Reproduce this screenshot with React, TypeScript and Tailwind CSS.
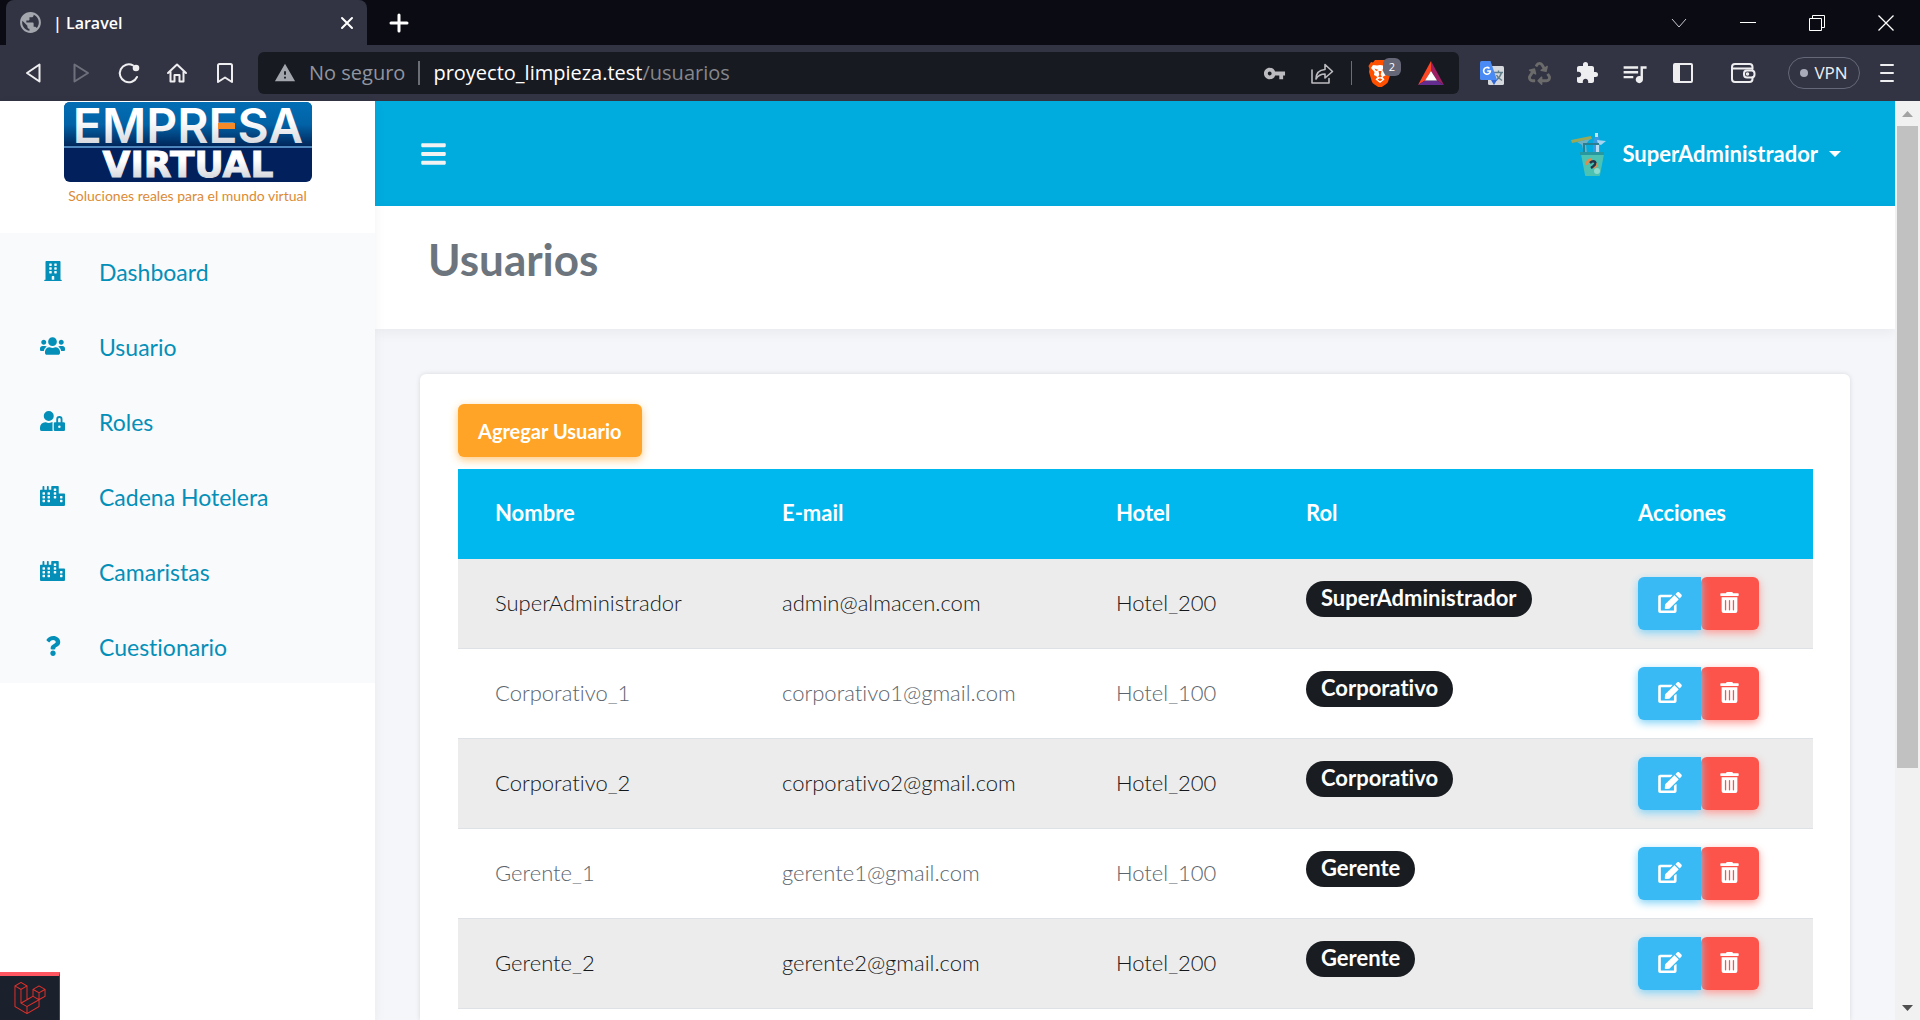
import React from "react";
import {
  FaBars,
  FaBuilding,
  FaCity,
  FaEdit,
  FaQuestion,
  FaRecycle,
  FaTrashAlt,
  FaUserLock,
  FaUsers,
} from "react-icons/fa";
import { MdExtension, MdPublic, MdQueueMusic, MdVpnKey, MdWarning } from "react-icons/md";
import { SiLaravel } from "react-icons/si";

const line = {
  fill: "none",
  stroke: "currentColor",
  strokeWidth: 2,
  strokeLinecap: "round" as const,
  strokeLinejoin: "round" as const,
};

function TabStrip() {
  return (
    <div className="flex h-[45px] shrink-0 items-stretch bg-[#0b0b14] pl-[6px] text-white">
      <div className="flex w-[361px] items-center rounded-t-lg bg-[#323443] pr-3 pl-3">
        <MdPublic className="size-[25px] text-[#a3a6ad]" />
        <span className="ml-[10px] flex-1 text-[16px] font-semibold">| Laravel</span>
        <button aria-label="Cerrar pestaña" className="flex size-4 items-center justify-center">
          <svg viewBox="0 0 14 14" className="size-[14px]" {...line}>
            <path d="M2 2l10 10M12 2L2 12" />
          </svg>
        </button>
      </div>
      <button aria-label="Nueva pestaña" className="ml-[22px] flex items-center">
        <svg viewBox="0 0 20 20" className="size-5" {...line} strokeWidth={3}>
          <path d="M10 2v16M2 10h16" />
        </svg>
      </button>
      <div className="ml-auto flex items-center gap-[53px] pr-[26px]">
        <button aria-label="Buscar pestañas">
          <svg viewBox="0 0 16 16" className="size-4" fill="none" stroke="#c9c9cf">
            <path d="M1 4l7 8 7-8" />
          </svg>
        </button>
        <button aria-label="Minimizar">
          <svg viewBox="0 0 16 16" className="size-4" fill="none" stroke="white">
            <path d="M0 7.500h16" />
          </svg>
        </button>
        <button aria-label="Restaurar">
          <svg viewBox="0 0 16 16" className="size-4" fill="none" stroke="white">
            <path d="M.5 3.500h12v12H.5zM3.500 3V.5h12v12H13" />
          </svg>
        </button>
        <button aria-label="Cerrar ventana">
          <svg viewBox="0 0 16 16" className="size-4" fill="none" stroke="white" strokeWidth={1.300}>
            <path d="M.5.5l15 15M15.500.5l-15 15" />
          </svg>
        </button>
      </div>
    </div>
  );
}

function Toolbar() {
  return (
    <div className="flex h-[56px] shrink-0 items-center bg-[#323443] pr-[25px] pl-[21px] text-[#eeeef0]">
      <div className="flex w-[237px] items-center gap-6">
        <button aria-label="Atrás">
          <svg viewBox="0 0 24 24" className="size-6" {...line}>
            <path d="M18.500 3.500v17L6 12z" />
          </svg>
        </button>
        <button aria-label="Adelante" className="text-[#6e707c]">
          <svg viewBox="0 0 24 24" className="size-6" {...line}>
            <path d="M5.500 3.500v17L19 12z" />
          </svg>
        </button>
        <button aria-label="Recargar">
          <svg viewBox="0 0 24 24" className="size-6" {...line}>
            <path d="M20 16A9 9 0 1 1 16 4.300" />
            <circle cx="19" cy="7" r="2.300" fill="currentColor" />
          </svg>
        </button>
        <button aria-label="Inicio">
          <svg viewBox="0 0 24 24" className="size-6" {...line}>
            <path d="M3 12l9-8.500 9 8.500M5.500 10.500v10h4v-6.500h5v6.500h4v-10" />
          </svg>
        </button>
        <button aria-label="Marcador">
          <svg viewBox="0 0 24 24" className="size-6" {...line}>
            <path d="M5 4.500q0-1.500 1.500-1.500h11q1.500 0 1.500 1.500v16.500l-7-4.500-7 4.500z" />
          </svg>
        </button>
      </div>

      <div className="flex h-[42px] flex-1 items-center rounded-md bg-[#181a21] pr-[14px] pl-[16px]">
        <MdWarning className="size-[22px] text-[#a3a6ad]" />
        <span className="ml-[13px] text-[20px] text-[#9095a0]">No seguro</span>
        <span className="mx-[13px] h-6 w-[2px] bg-[#6c6e75]" />
        <span className="text-[20px] text-white">
          proyecto_limpieza.test<span className="text-[#85878d]">/usuarios</span>
        </span>
        <div className="ml-auto flex items-center">
          <button aria-label="Contraseñas">
            <MdVpnKey className="size-[23px] text-[#bcbcc0]" />
          </button>
          <button aria-label="Compartir" className="ml-[24px] text-[#bcbcc0]">
            <svg viewBox="0 0 24 24" className="size-6" {...line} strokeWidth={1.600}>
              <path d="M2 9v13h17v-4.500" />
              <path d="M6 18c0-6 3-9 9-9.500V3.500l7.500 7-7.500 6.500v-4c-4 0-7 1.500-9 5z" />
            </svg>
          </button>
          <span className="ml-[17px] h-6 w-px bg-[#6c6e75]" />
          <button aria-label="Brave Shields" className="relative ml-[16px]">
            <svg viewBox="0 0 24 28" className="h-7 w-6">
              <path
                fill="#ff5000"
                d="M7 1h10l2 2.500 2-.5 2.500 4-1 3 .5 3-3 10c-1 2-6 5-8 6-2-1-7-4-8-6l-3-10 .5-3-1-3L3 3l2 .5z"
              />
              <path
                fill="white"
                d="M5 6l4 .5 3-.5 3 .5 4-.5 2 3-3.500 4 .5 3-3.500 2 2 2.500-4.500 3.500-4.500-3.500 2-2.500L6 16l.5-3L3 9z"
              />
              <path
                fill="#ff5000"
                d="M6.500 9.500l4 1.500-2.500 1zM17.500 9.500l-4 1.500 2.500 1zM10.500 12h3l-.8 4 1.300 1.500-2 1-2-1 1.300-1.500zM9.500 20.500l2.500-1.200 2.500 1.200-2.500 1.800z"
              />
            </svg>
            <span className="absolute -top-[1px] left-[15px] flex h-[18px] w-[18px] items-center justify-center rounded-md bg-[#656777] text-[11px] text-white">
              2
            </span>
          </button>
          <button aria-label="Brave Rewards" className="ml-[25px]">
            <svg viewBox="0 0 28 24" className="h-6 w-7">
              <path fill="#ff4724" d="M14 0v10L8 19.500 1 24z" />
              <path fill="#9e1f63" d="M14 0l13 24-7-4.500L14 10z" />
              <path fill="#662d91" d="M1 24l7-4.500h12l7 4.500z" />
              <path fill="white" d="M14 10l6 9.500H8z" />
            </svg>
          </button>
        </div>
      </div>

      <div className="ml-[20px] flex items-center">
        <button aria-label="Traductor">
          <svg viewBox="0 0 26 26" className="size-[26px]">
            <rect x="9" y="6" width="16" height="19" rx="1.500" fill="#d5d8dc" />
            <path d="M15 12.500h9M19.500 10.500v2M22.500 12.500c-1 4-3 6-5.500 8M17.500 15c1 2.500 3 4 5.500 5.500" fill="none" stroke="#607d8b" strokeWidth="1.400" />
            <path d="M12 20h6l-3 5z" fill="#3367d6" />
            <path d="M2.500 1h9L18 20H2.500Q1 20 1 18.500v-16Q1 1 2.500 1z" fill="#4a8af4" />
            <path d="M10.500 8.500A3.400 3.400 0 1 0 11.400 11H8.200" fill="none" stroke="white" strokeWidth="1.600" />
          </svg>
        </button>
        <button aria-label="Reciclar" className="ml-[23px]">
          <FaRecycle className="size-[23px] text-[#6b6b6b]" />
        </button>
        <button aria-label="Extensiones" className="ml-[24px]">
          <MdExtension className="size-6" />
        </button>
        <button aria-label="Lista de reproducción" className="ml-[21px]">
          <MdQueueMusic className="size-[29px]" />
        </button>
        <button aria-label="Panel lateral" className="ml-[23px]">
          <svg viewBox="0 0 22 20" className="h-5 w-[22px]">
            <path fill="currentColor" fillRule="evenodd" d="M3 0h16q2 0 2 2v16q0 2-2 2H3q-2 0-2-2V2q0-2 2-2zM8 2v16h11V2z" />
          </svg>
        </button>
        <button aria-label="Cartera" className="ml-[36px]">
          <svg viewBox="0 0 26 24" className="h-6 w-[26px]" {...line}>
            <path d="M22.500 8V6q0-3-3-3H5Q2 3 2 6v12q0 3 3 3h14.500q3 0 3-3v-1.500M2.500 7.500h20" />
            <rect x="14" y="9.500" width="10.500" height="7" rx="3" />
            <circle cx="17.500" cy="13" r=".8" fill="currentColor" />
          </svg>
        </button>
        <button className="ml-[32px] flex h-8 w-[72px] items-center justify-center gap-[6px] rounded-full border border-[#656879] text-[17px]">
          <span className="size-[8px] rounded-full bg-[#a9abbb]" />
          VPN
        </button>
        <button aria-label="Menú" className="ml-[19px]">
          <svg viewBox="0 0 16 20" className="h-5 w-4" {...line}>
            <path d="M2 2h12M2 10h12M2 18h12" />
          </svg>
        </button>
      </div>
    </div>
  );
}

function CompanyLogo() {
  return (
    <div className="flex h-[132px] flex-col items-center pt-px">
      <svg viewBox="0 0 248 80" className="h-20 w-[248px] overflow-visible" role="img" aria-label="Empresa Virtual">
        <defs>
          <linearGradient id="logoTop" x1="0" y1="0" x2="0" y2="1">
            <stop offset="0" stopColor="#026eb5" />
            <stop offset=".5" stopColor="#0262a6" />
            <stop offset="1" stopColor="#012458" />
          </linearGradient>
          <linearGradient id="logoText" x1="0" y1="0" x2="0" y2="1">
            <stop offset=".4" stopColor="#ffffff" />
            <stop offset="1" stopColor="#c4c8d0" />
          </linearGradient>
        </defs>
        <rect width="248" height="80" rx="6" fill="#01205c" />
        <path d="M0 45V6q0-6 6-6h236q6 0 6 6v39z" fill="url(#logoTop)" />
        <path d="M0 45h248" stroke="#4d86bd" strokeWidth="2" />
        <text x="124" y="41" textAnchor="middle" fontFamily="Inter, sans-serif" fontWeight="600" fontSize="48" fill="url(#logoText)">
          EMPRESA
        </text>
        <path d="M154 21h17v6h-17z" fill="#f58a26" />
        <text
          x="124"
          y="75"
          textAnchor="middle"
          fontFamily="DejaVu Sans, sans-serif"
          fontWeight="700"
          fontSize="36"
          fill="url(#logoText)"
          stroke="url(#logoText)"
          strokeWidth="1"
        >
          VIRTUAL
        </text>
      </svg>
      <span className="mt-[4px] text-[14px] leading-5 text-[#dc8a35]">
        Soluciones reales para el mundo virtual
      </span>
    </div>
  );
}

const menu = [
  { label: "Dashboard", icon: <FaBuilding className="h-5 w-[18px]" /> },
  { label: "Usuario", icon: <FaUsers className="h-5 w-[25px]" /> },
  { label: "Roles", icon: <FaUserLock className="h-5 w-[25px]" /> },
  { label: "Cadena Hotelera", icon: <FaCity className="h-5 w-[25px]" /> },
  { label: "Camaristas", icon: <FaCity className="h-5 w-[25px]" /> },
  { label: "Cuestionario", icon: <FaQuestion className="size-5" /> },
];

function Sidebar() {
  return (
    <aside className="relative flex w-[375px] shrink-0 flex-col bg-white shadow-[0_4px_12px_rgba(0,0,0,0.05)]">
      <CompanyLogo />
      <nav className="bg-[#f9fafc]">
        {menu.map((item) => (
          <a key={item.label} href="#" className="flex h-[75px] items-center pl-[40px] text-[#048fb8]">
            <span className="flex w-[25px] justify-center">{item.icon}</span>
            <span className="ml-[34px] pt-[2px] text-[23px] leading-8">{item.label}</span>
          </a>
        ))}
      </nav>
      <button
        aria-label="Barra de depuración de Laravel"
        className="mt-auto flex h-12 w-[60px] items-center justify-center border-t-4 border-r border-t-[#ff5661] border-r-[#3f4651] bg-[#1a202c]"
      >
        <SiLaravel className="size-8 text-[#e0302a]" />
      </button>
    </aside>
  );
}

function Avatar() {
  return (
    <svg viewBox="0 0 38 44" className="h-11 w-[38px]" aria-hidden="true">
      <path d="M1 8l20-4 1 3L2 11z" fill="#9aa957" />
      <path d="M7 10l13-3-4 5 1 10h-3L12 13z" fill="#6fb0c4" />
      <path d="M26 2l2 1 2 6v14h-7V10z" fill="#3c9be0" />
      <path d="M25 1h3v4h-3z" fill="#c5e3f2" />
      <path d="M27 8l9 1-5 4-3-1z" fill="#a5d5f1" />
      <path d="M14 21v-9h14v9" fill="none" stroke="#287f92" strokeWidth="2" />
      <path d="M26 13h3v11h-3z" fill="#bcdcf0" />
      <path d="M11 22h23l-4 21q0 1-1 1H16q-1 0-1-1z" fill="#4cc3b2" />
      <path d="M10 20h24v3H10z" fill="#2798a0" />
      <path d="M17 33q-1-4 5-6" fill="none" stroke="#e58a4d" strokeWidth="2.500" />
      <path d="M20 31q3-3 5-1t-4 6" fill="none" stroke="#26344a" strokeWidth="2.500" />
      <path d="M24 36q4-2 3-5" fill="none" stroke="#e58a4d" strokeWidth="1.500" />
      <circle cx="27" cy="39" r="3" fill="#8bdccf" />
    </svg>
  );
}

const users = [
  { name: "SuperAdministrador", email: "admin@almacen.com", hotel: "Hotel_200", role: "SuperAdministrador" },
  { name: "Corporativo_1", email: "corporativo1@gmail.com", hotel: "Hotel_100", role: "Corporativo" },
  { name: "Corporativo_2", email: "corporativo2@gmail.com", hotel: "Hotel_200", role: "Corporativo" },
  { name: "Gerente_1", email: "gerente1@gmail.com", hotel: "Hotel_100", role: "Gerente" },
  { name: "Gerente_2", email: "gerente2@gmail.com", hotel: "Hotel_200", role: "Gerente" },
];

const cell = "h-[90px] border-b border-[#dee2e6] pl-[37px]";
const textCell = "h-[90px] border-b border-[#dee2e6] pb-[3px] pl-[37px]";

function UsersTable() {
  return (
    <table className="mt-3 w-full table-fixed border-separate border-spacing-0 text-left text-[22px]">
      <colgroup>
        <col className="w-[287px]" />
        <col className="w-[334px]" />
        <col className="w-[190px]" />
        <col className="w-[332px]" />
        <col className="w-[212px]" />
      </colgroup>
      <thead>
        <tr className="bg-[#00b8ee] text-white">
          {["Nombre", "E-mail", "Hotel", "Rol", "Acciones"].map((h) => (
            <th key={h} className="h-[90px] pb-[3px] pl-[37px] font-bold">
              {h}
            </th>
          ))}
        </tr>
      </thead>
      <tbody>
        {users.map((u) => (
          <tr key={u.name} className="font-light text-[#5c656d] odd:bg-[#ececec] odd:text-[#15181b]">
            <td className={textCell}>{u.name}</td>
            <td className={textCell}>{u.email}</td>
            <td className={textCell}>{u.hotel}</td>
            <td className={cell}>
              <span className="mb-[10px] inline-flex h-9 items-center rounded-full bg-[#191d21] px-[15px] pb-[2px] align-middle font-bold text-white">
                {u.role}
              </span>
            </td>
            <td className={cell}>
              <div className="flex">
                <button
                  aria-label={"Editar " + u.name}
                  className="relative flex h-[53px] w-[63px] items-center justify-center rounded-l-md bg-[#3abaf4] pb-[2px] text-white shadow-[0_3px_8px_#82d3f8]"
                >
                  <FaEdit className="h-[21px] w-6" />
                </button>
                <button
                  aria-label={"Eliminar " + u.name}
                  className="flex h-[53px] w-[58px] items-center justify-center rounded-md bg-[#fc544b] pr-[2px] pb-[2px] text-white shadow-[0_3px_8px_#fd9b96]"
                >
                  <FaTrashAlt className="size-[21px]" />
                </button>
              </div>
            </td>
          </tr>
        ))}
      </tbody>
    </table>
  );
}

function Scrollbar() {
  return (
    <div className="flex w-[25px] shrink-0 flex-col items-center bg-[#f1f1f1]" aria-hidden="true">
      <svg viewBox="0 0 25 25" className="size-[25px]">
        <path d="M7 16l5.500-6 5.500 6z" fill="#a3a3a3" />
      </svg>
      <div className="flex w-[21px] flex-1 flex-col">
        <div className="flex-[642] bg-[#c1c1c1]" />
        <div className="flex-[227]" />
      </div>
      <svg viewBox="0 0 25 25" className="size-[25px]">
        <path d="M7 10h11l-5.500 6z" fill="#505050" />
      </svg>
    </div>
  );
}

export default function App() {
  return (
    <div className="flex h-screen flex-col overflow-hidden font-['Open_Sans','Noto_Sans',sans-serif]">
      <TabStrip />
      <Toolbar />
      <div className="flex min-h-0 flex-1 font-[Lato,sans-serif] [font-variant-ligatures:no-common-ligatures]">
        <Sidebar />
        <main className="flex min-w-0 flex-1 flex-col overflow-hidden bg-[#f4f6fa]">
          <header className="flex h-[105px] shrink-0 items-center justify-between bg-[#00abde] pr-[54px] pl-[46px] text-white">
            <button aria-label="Alternar menú">
              <FaBars className="h-7 w-[25px] text-[#f2f2f2]" />
            </button>
            <button className="flex items-center text-[22px] font-bold">
              <Avatar />
              <span className="ml-[15px]">SuperAdministrador</span>
              <svg viewBox="0 0 12 6" className="ml-[11px] h-[6px] w-3" fill="currentColor">
                <path d="M0 0h12L6 6z" />
              </svg>
            </button>
          </header>
          <div className="h-[123px] shrink-0 bg-white px-[53px] pt-[28px] shadow-[0_4px_12px_rgba(0,0,0,0.05)]">
            <h1 className="text-[44px] leading-[50px] font-bold text-[#6c757d]">Usuarios</h1>
          </div>
          <section className="mx-[45px] mt-[45px] flex-1 rounded-t-md bg-white px-[38px] pt-[30px] shadow-[0_0_5px_rgba(0,0,0,0.12)]">
            <button className="block h-[53px] rounded-md bg-[#ffa426] px-5 text-[20px] font-bold text-white shadow-[0_3px_8px_#ffc97f]">
              Agregar Usuario
            </button>
            <UsersTable />
          </section>
        </main>
        <Scrollbar />
      </div>
    </div>
  );
}
